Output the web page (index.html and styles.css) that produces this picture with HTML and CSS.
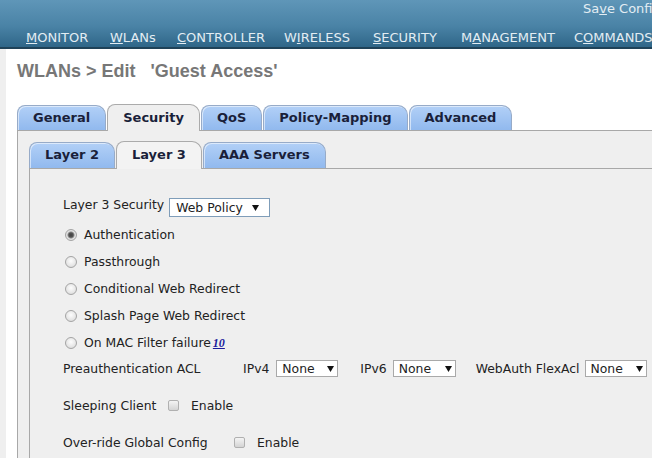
FILE: index.html
```html
<!DOCTYPE html>
<html>
<head>
<meta charset="utf-8">
<link rel="stylesheet" href="styles.css">
</head>
<body>
<div class="header">
  <div class="topbar">Sa<u>v</u>e Configuration</div>
  <div class="nav">
    <span><u>M</u>ONITOR</span>
    <span><u>W</u>LANs</span>
    <span><u>C</u>ONTROLLER</span>
    <span>W<u>I</u>RELESS</span>
    <span><u>S</u>ECURITY</span>
    <span>M<u>A</u>NAGEMENT</span>
    <span>C<u>O</u>MMANDS</span>
  </div>
</div>
<div class="main">
  <h1 class="title">WLANs &gt; Edit   'Guest Access'</h1>
  <div class="tabs">
    <div class="tab">General</div>
    <div class="tab active">Security</div>
    <div class="tab">QoS</div>
    <div class="tab">Policy-Mapping</div>
    <div class="tab">Advanced</div>
  </div>
  <div class="panel">
    <div class="tabs">
      <div class="tab">Layer 2</div>
      <div class="tab active sub">Layer 3</div>
      <div class="tab">AAA Servers</div>
    </div>
    <div class="subpanel">
      <div class="row-l3">
        <span class="lbl">Layer 3 Security</span>
        <span class="sel sel-wide"><span>Web Policy</span><svg width="7" height="6" viewBox="0 0 7 6"><path d="M0 0H7L3.5 6Z" fill="#111"/></svg></span>
      </div>
      <div class="opts">
        <div class="opt"><span class="radio on"></span><span>Authentication</span></div>
        <div class="opt"><span class="radio"></span><span>Passthrough</span></div>
        <div class="opt"><span class="radio"></span><span>Conditional Web Redirect</span></div>
        <div class="opt"><span class="radio"></span><span>Splash Page Web Redirect</span></div>
        <div class="opt"><span class="radio"></span><span>On MAC Filter failure<a class="fn">10</a></span></div>
      </div>
      <div class="acl">
        <span class="acl-lbl">Preauthentication ACL</span>
        <span class="acl-item">IPv4</span>
        <span class="sel sel-none"><span>None</span><svg width="7" height="6" viewBox="0 0 7 6"><path d="M0 0H7L3.5 6Z" fill="#111"/></svg></span>
        <span class="acl-item v6">IPv6</span>
        <span class="sel sel-none w63"><span>None</span><svg width="7" height="6" viewBox="0 0 7 6"><path d="M0 0H7L3.5 6Z" fill="#111"/></svg></span>
        <span class="acl-item flex">WebAuth FlexAcl</span>
        <span class="sel sel-none"><span>None</span><svg width="7" height="6" viewBox="0 0 7 6"><path d="M0 0H7L3.5 6Z" fill="#111"/></svg></span>
      </div>
      <div class="chk-row sleeping">
        <span class="chk-lbl">Sleeping Client</span>
        <span class="cb"></span>
        <span>Enable</span>
      </div>
      <div class="chk-row override">
        <span class="chk-lbl">Over-ride Global Config</span>
        <span class="cb"></span>
        <span>Enable</span>
      </div>
    </div>
  </div>
</div>
</body>
</html>
```

FILE: styles.css
```css
html, body {
  margin: 0;
  padding: 0;
  background: #fff;
  width: 652px;
  height: 458px;
  overflow: hidden;
  font-family: "DejaVu Sans", Verdana, sans-serif;
}

.header {
  height: 47px;
  border-bottom: 2px solid #1f4258;
  background: linear-gradient(to bottom, #5f96b8 0%, #4a83a6 55%, #2f6688 100%);
  color: #e3edf3;
  font-size: 13px;
  white-space: nowrap;
  overflow: hidden;
}

.topbar {
  height: 17px;
  box-sizing: border-box;
  padding: 1px 0 0 583px;
  line-height: 16px;
}

.nav {
  display: grid;
  grid-template-columns: 84px 67px 107px 89px 88px 113px max-content;
  padding: 13px 0 0 26px;
  line-height: 16px;
}

.main {
  border-left: 6px solid #efefef;
  padding-left: 11px;
  height: 409px;
  box-sizing: border-box;
  overflow: hidden;
}

.title {
  margin: 11px 0 22px;
  font: bold 18px/22px "Liberation Sans", Arial, sans-serif;
  color: #777;
  white-space: pre;
}

.tabs {
  display: flex;
  align-items: flex-end;
  gap: 1px;
  height: 26px;
  position: relative;
  z-index: 1;
}

.tab {
  height: 25px;
  box-sizing: border-box;
  padding: 0 15px;
  border: 1px solid #97abc8;
  border-bottom: none;
  border-radius: 8px 10px 0 0;
  background: linear-gradient(to bottom, #b2d0f7, #91b9ee);
  box-shadow: inset 1px 1px 0 rgba(255, 255, 255, 0.55);
  font: bold 13px/24px "DejaVu Sans", Verdana, sans-serif;
  color: #1a1f3a;
  white-space: nowrap;
}

.panel .tabs .tab {
  height: 26px;
}

.tab.active {
  height: 27px;
  margin-bottom: -1px;
  padding-top: 1px;
  background: #efefef;
  border-color: #ababab;
  box-shadow: none;
}

.panel .tabs .tab.active {
  height: 28px;
  padding-top: 1px;
  background: #f3f3f3;
}

.panel {
  border-top: 1px solid #a8a8a8;
  border-left: 1px solid #a8a8a8;
  background: #efefef;
  padding: 11px 0 0 11px;
}

.subpanel {
  border-top: 1px solid #a8a8a8;
  border-left: 1px solid #a8a8a8;
  padding: 28px 0 0 33px;
  height: 300px;
  font: 12.4px/15px "DejaVu Sans", Verdana, sans-serif;
  color: #222;
}

.row-l3 {
  display: flex;
  align-items: flex-start;
  gap: 5px;
}

.sel {
  display: inline-flex;
  align-items: center;
  justify-content: space-between;
  box-sizing: border-box;
  background: #fff;
  border: 1px solid #a9a9a9;
  height: 17px;
  width: 62px;
  padding: 0 3px 0 5px;
  line-height: 15px;
}

.sel-wide {
  margin-top: 1px;
  width: 101px;
  height: 19px;
  border-color: #7f9db9;
  padding: 0 10px 0 6px;
}

.sel.w63 {
  width: 63px;
}

.opts {
  margin-top: 4px;
}

.opt {
  display: flex;
  align-items: center;
  height: 27px;
  gap: 7px;
}

.radio {
  width: 12px;
  height: 12px;
  margin-left: 2px;
  box-sizing: border-box;
  border-radius: 50%;
  border: 1px solid #a4a4a4;
  background: radial-gradient(circle at 50% 40%, #fdfdfd 0%, #e6e6e6 60%, #d2d2d2 100%);
}

.radio.on {
  background: radial-gradient(circle at 50% 50%, #3f3f3f 0, #555 2.2px, #9a9a9a 3.2px, #e4e4e4 4px, #d4d4d4 100%);
}

.fn {
  margin-left: 2px;
  font: italic bold 12px "Liberation Serif", "Times New Roman", serif;
  color: #1b1b9c;
  text-decoration: underline;
}

.acl {
  display: flex;
  align-items: center;
  height: 25px;
}

.acl-lbl {
  width: 180px;
}

.acl-item {
  margin-right: 7px;
}

.acl-item.v6 {
  margin-left: 22px;
  margin-right: 6px;
}

.acl-item.flex {
  margin-left: 20px;
  margin-right: 5px;
}

.chk-row {
  display: flex;
  align-items: center;
  height: 24px;
}

.sleeping {
  margin-top: 12px;
}

.override {
  margin-top: 13px;
}

.sleeping .chk-lbl {
  width: 105px;
}

.override .chk-lbl {
  width: 171px;
}

.cb {
  width: 11px;
  height: 11px;
  margin-right: 12px;
  box-sizing: border-box;
  border: 1px solid #b0b0b0;
  border-radius: 2px;
  background: linear-gradient(to bottom, #f4f4f4, #d4d4d4);
}
```
